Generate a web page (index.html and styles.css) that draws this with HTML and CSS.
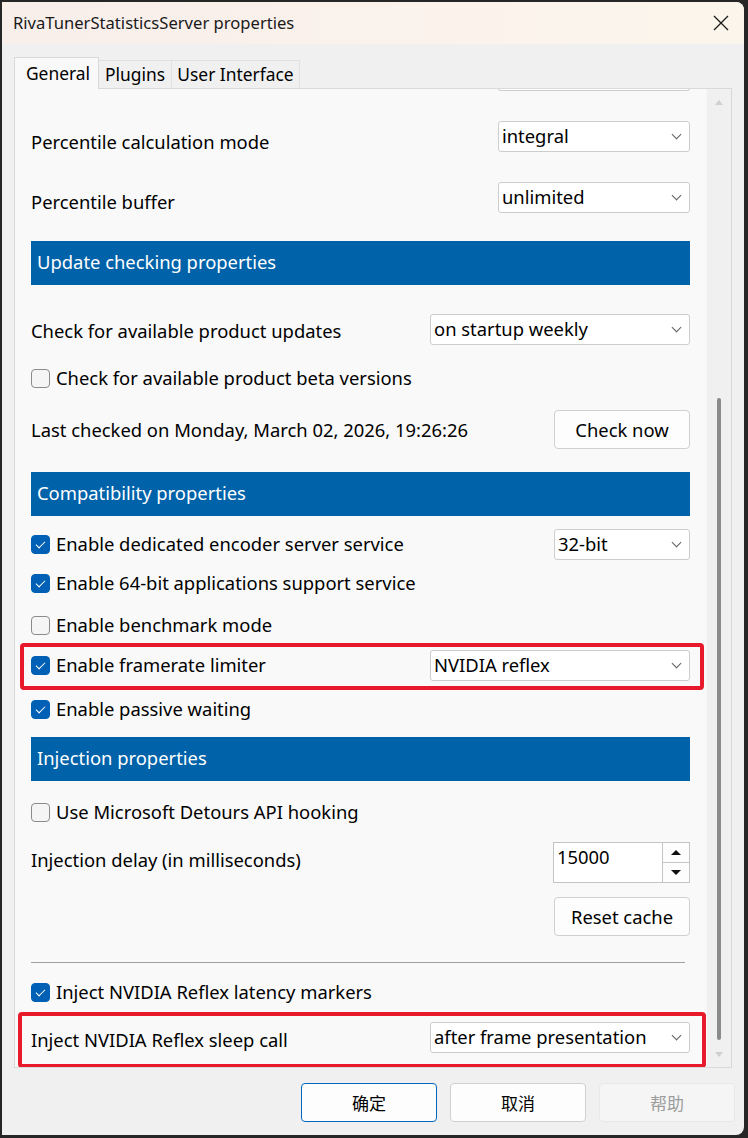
FILE: index.html
```html
<!DOCTYPE html>
<html lang="en">
<head>
	<meta charset="UTF-8">
	<title>RivaTunerStatisticsServer properties</title>
	<link rel="stylesheet" href="styles.css">
</head>
<body>
	<div class="window">
		<!-- title bar -->
		<div class="titlebar">
			<span class="title">RivaTunerStatisticsServer properties</span>
			<span class="close">
				<svg width="16" height="16" viewBox="0 0 16 16"><path d="M1 1L15 15M15 1L1 15" stroke="#1a1a1a" stroke-width="1.3" fill="none"/></svg>
			</span>
		</div>
		<div class="client">
			<div class="tabs">
				<div class="tab current t-gen">General</div>
				<div class="tab t-plug">Plugins</div>
				<div class="tab t-ui">User Interface</div>
			</div>
			<div class="page">
				<div class="viewport">
					<div class="scroller">
						<div class="row r-top">
							<span></span>
							<div class="combo w192"></div>
						</div>
						<div class="row r-pcm">
							<span class="label">Percentile calculation mode</span>
							<div class="combo w192"><span>integral</span><i class="chev"></i></div>
						</div>
						<div class="row r-pbuf">
							<span class="label">Percentile buffer</span>
							<div class="combo w192"><span>unlimited</span><i class="chev"></i></div>
						</div>
						<div class="header h-upd">Update checking properties</div>
						<div class="row r-upd">
							<span class="label">Check for available product updates</span>
							<div class="combo w260"><span>on startup weekly</span><i class="chev"></i></div>
						</div>
						<label class="check r-beta"><i class="box"></i><span>Check for available product beta versions</span></label>
						<div class="row r-last">
							<span class="label">Last checked on Monday, March 02, 2026, 19:26:26</span>
							<div class="btn">Check now</div>
						</div>
						<div class="header h-comp">Compatibility properties</div>
						<div class="row r-enc">
							<label class="check"><i class="box on"></i><span>Enable dedicated encoder server service</span></label>
							<div class="combo w136"><span>32-bit</span><i class="chev"></i></div>
						</div>
						<label class="check r-64"><i class="box on"></i><span>Enable 64-bit applications support service</span></label>
						<label class="check r-bench"><i class="box"></i><span>Enable benchmark mode</span></label>
						<div class="row r-limit mark">
							<label class="check"><i class="box on"></i><span>Enable framerate limiter</span></label>
							<div class="combo w260"><span>NVIDIA reflex</span><i class="chev"></i></div>
						</div>
						<label class="check r-passive"><i class="box on"></i><span>Enable passive waiting</span></label>
						<div class="header h-inj">Injection properties</div>
						<label class="check r-detours"><i class="box"></i><span>Use Microsoft Detours API hooking</span></label>
						<div class="row r-delay">
							<span class="label">Injection delay (in milliseconds)</span>
							<div class="spin">
								<div class="spin-edit">15000</div>
								<div class="spin-btns">
									<div class="spin-btn"><i class="tri up"></i></div>
									<div class="spin-btn"><i class="tri down"></i></div>
								</div>
							</div>
						</div>
						<div class="row r-reset">
							<span></span>
							<div class="btn">Reset cache</div>
						</div>
						<div class="sep"></div>
						<label class="check r-markers"><i class="box on"></i><span>Inject NVIDIA Reflex latency markers</span></label>
						<div class="row r-sleep mark mark2">
							<span class="label">Inject NVIDIA Reflex sleep call</span>
							<div class="combo w260"><span>after frame presentation</span><i class="chev"></i></div>
						</div>
					</div>
				</div>
				<div class="vscroll">
					<div class="arrow"><i class="tri-s up"></i></div>
					<div class="track"><div class="thumb"></div></div>
					<div class="arrow"><i class="tri-s down"></i></div>
				</div>
			</div>
			<div class="buttons">
				<div class="btn default">确定</div>
				<div class="btn">取消</div>
				<div class="btn disabled">帮助</div>
			</div>
		</div>
	</div>
</body>
</html>
```

FILE: styles.css
```css
*{padding:0;margin:0;box-sizing:border-box;}
html,body{height:100%;}
body{background:#262626;font-family:"Noto Sans","Noto Sans CJK SC",sans-serif;font-size:18.4px;color:#000;padding:2px 4px 0 2px;}
.window{width:742px;height:1133px;background:#f0f0f0;border-radius:0 8px 8px 0;overflow:hidden;display:flex;flex-direction:column;}

/* 标题栏 */
.titlebar{height:42px;display:flex;align-items:center;justify-content:space-between;padding:0 15px 0 11px;background:linear-gradient(90deg,#f8eeea,#fbf3ec 70%,#fbf6ec);}
.title{font-size:16.6px;color:#1a1a1a;margin-top:-2px;}
.close{display:flex;margin-top:-1px;}

.client{flex:1;padding:13px 12px 0 12px;display:flex;flex-direction:column;}

/* 选项卡 */
.tabs{display:flex;align-items:flex-end;height:31px;position:relative;z-index:1;}
.tab{height:28px;line-height:26px;font-size:17.4px;text-align:center;white-space:nowrap;border:1px solid #e0e0e0;border-bottom:none;border-left:none;background:#f0f0f0;color:#000;}
.tab.current{height:32px;line-height:30px;background:#f9f9f9;border:1px solid #d9d9d9;border-bottom:none;margin-bottom:-1px;padding-left:3px;}
.t-gen{width:85px;}
.t-plug{width:73px;}
.t-ui{width:128px;}
.page{height:980px;border:1px solid #d9d9d9;background:#f9f9f9;display:flex;}
.viewport{width:691px;height:978px;overflow:hidden;}
.scroller{margin-top:-29px;padding:0 16px;}

/* 行 */
.row{display:flex;align-items:center;justify-content:space-between;position:relative;}
.label{position:relative;}
.r-top{height:31px;}
.r-pcm{height:31px;margin-top:30px;}
.r-pcm .label{top:5px;}
.r-pbuf{height:31px;margin-top:30px;}
.r-pbuf .label{top:4px;}
.h-upd{margin-top:28px;}
.r-upd{height:31px;margin-top:29px;}
.r-upd .label{top:1px;}
.r-beta{margin-top:24px;}
.r-last{height:39px;margin-top:22px;}
.r-last .label{top:0;}
.h-comp{margin-top:23px;}
.r-enc{height:31px;margin-top:13px;}
.r-64{margin-top:14px;}
.r-bench{margin-top:23px;}
.r-limit{height:31px;margin-top:15px;}
.r-passive{margin-top:19px;}
.h-inj{margin-top:18px;}
.r-detours{margin-top:22px;}
.r-delay{height:41px;margin-top:20px;}
.r-delay .label{top:-3px;}
.r-reset{height:39px;margin-top:14px;}
.sep{height:1px;background:#a0a0a0;margin:26px 5px 0 0;}
.r-markers{margin-top:20px;}
.r-sleep{height:31px;margin-top:20px;}
.r-sleep .label{top:2px;}

/* 红框标注 */
.mark::after{content:"";position:absolute;left:-11px;right:-14px;top:-7px;bottom:-9px;border:4px solid #e8192b;border-radius:4px;pointer-events:none;}
.mark2::after{left:-13px;right:-16px;top:-10px;bottom:-15px;}

/* 分组标题 */
.header{height:44px;background:#0062a9;color:#fff;line-height:42px;padding-left:6px;}

/* 复选框 */
.check{display:flex;align-items:center;height:19px;white-space:nowrap;}
.check span{position:relative;top:-1px;}
.box{width:19px;height:19px;border:1px solid #8b8b8b;border-radius:4px;background:#f5f5f5;margin-right:6px;flex:none;display:flex;align-items:center;justify-content:center;}
.box.on{background:#0060b5;border-color:#0060b5;}
.box.on::before{content:"";width:8px;height:4px;border-left:1.3px solid #fff;border-bottom:1.3px solid #fff;transform:rotate(-45deg);margin-top:-3px;}

/* 下拉框 */
.combo{height:31px;border:1px solid #cdcdcd;border-radius:3px;background:#fff;display:flex;align-items:center;justify-content:space-between;padding:0 9px 0 3px;}
.combo span{margin-top:-2px;}
.w192{width:192px;}
.w260{width:260px;}
.w136{width:136px;}
.r-top .combo{border-top:none;}
.chev{width:7px;height:7px;border-right:1px solid #5e5e5e;border-bottom:1px solid #5e5e5e;transform:rotate(45deg);margin-top:-4px;}

/* 按钮 */
.btn{width:136px;height:39px;border:1px solid #d0d0d0;border-radius:4px;background:#fdfdfd;display:flex;align-items:center;justify-content:center;}
.btn.default{border-color:#0067c0;}
.btn.disabled{background:#f5f5f5;border-color:#e8e8e8;color:#9d9d9d;}

/* 数字框 */
.spin{width:137px;height:41px;display:flex;border:1px solid #c4c4c4;background:#fff;}
.spin-edit{flex:1;padding:0 0 0 3px;line-height:28px;}
.spin-btns{width:27px;display:flex;flex-direction:column;border-left:1px solid #c4c4c4;}
.spin-btn{flex:1;display:flex;align-items:center;justify-content:center;background:#fdfdfd;}
.spin-btn+.spin-btn{border-top:1px solid #c4c4c4;}
.tri{width:0;height:0;border-left:5px solid transparent;border-right:5px solid transparent;}
.tri.up{border-bottom:5px solid #111;}
.tri.down{border-top:5px solid #111;}

/* 滚动条 */
.vscroll{width:25px;background:#f0f0f0;border-left:1px solid #f6f6f6;display:flex;flex-direction:column;align-items:center;}
.arrow{height:26px;display:flex;align-items:center;justify-content:center;}
.tri-s{width:0;height:0;border-left:4px solid transparent;border-right:4px solid transparent;}
.tri-s.up{border-bottom:5px solid #cfcfcf;}
.tri-s.down{border-top:5px solid #cfcfcf;}
.track{flex:1;}
.thumb{width:4px;height:642px;margin-top:283px;background:#8a8a8a;border-radius:2px;}

/* 底部按钮 */
.buttons{display:flex;justify-content:flex-end;gap:13px;margin-top:15px;margin-right:-3px;}
.buttons .btn{font-family:"Noto Sans CJK SC",sans-serif;font-size:17px;}
```
